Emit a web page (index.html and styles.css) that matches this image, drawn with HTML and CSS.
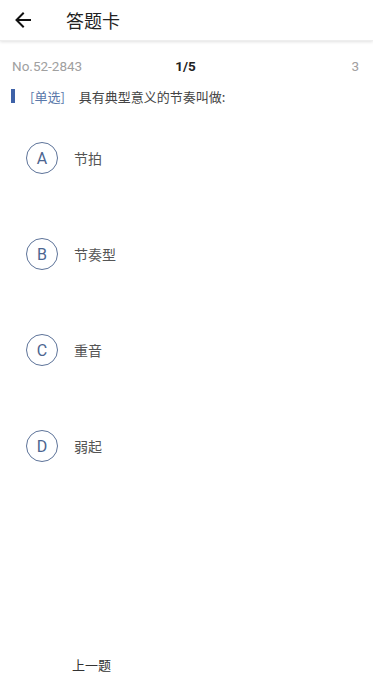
FILE: index.html
```html
<!DOCTYPE html>
<html lang="zh">
<head>
<meta charset="utf-8">
<link rel="stylesheet" href="styles.css">
</head>
<body>
<div class="page">
  <header class="topbar">
    <svg class="back" width="20" height="20" viewBox="0 0 20 20"><path d="M17 10H4M10 3.5L3.5 10L10 16.5" fill="none" stroke="#111" stroke-width="2" stroke-linecap="square"/></svg>
    <span class="title">答题卡</span>
  </header>
  <div class="meta">
    <span class="no">No.52-2843</span>
    <span class="idx">1/5</span>
    <span class="num">3</span>
  </div>
  <div class="question">
    <span class="bar"></span>
    <span class="type">[单选]</span>
    <span class="qtext">具有典型意义的节奏叫做:</span>
  </div>
  <ul class="options">
    <li class="opt"><span class="circle">A</span><span class="otext">节拍</span></li>
    <li class="opt"><span class="circle">B</span><span class="otext">节奏型</span></li>
    <li class="opt"><span class="circle">C</span><span class="otext">重音</span></li>
    <li class="opt"><span class="circle">D</span><span class="otext">弱起</span></li>
  </ul>
  <footer class="bottom">
    <span class="prev">上一题</span>
  </footer>
</div>
</body>
</html>
```
FILE: styles.css
```css
* { box-sizing: border-box; }
html, body { margin: 0; padding: 0; background: #fff; }
body { font-family: "Noto Sans CJK SC", Roboto, "Noto Sans", sans-serif; }
.page { width: 373px; height: 686px; display: flex; flex-direction: column; }
.topbar {
  height: 41px; display: flex; align-items: center; padding-left: 13px;
  box-shadow: 0 1px 3px rgba(0,0,0,0.12); border-bottom: 1px solid #eee;
}
.back { display: block; }
.title { margin-left: 33px; font-size: 18px; color: #222; line-height: 1; }
.meta {
  display: grid; grid-template-columns: 1fr auto 1fr; align-items: center;
  padding: 0 14px 0 12px; margin-top: 17px; height: 16px;
  font-family: Roboto, "Noto Sans", sans-serif; font-size: 13.5px; color: #a0a0a0;
}
.idx { color: #222; font-weight: bold; }
.num { justify-self: end; }
.question { display: flex; align-items: center; margin-top: 14px; height: 16px; }
.bar { width: 4px; height: 14px; background: #3e62a8; margin-left: 11px; }
.type { margin-left: 15px; font-size: 13px; color: #5a78aa; }
.qtext { margin-left: 14px; font-size: 13px; color: #444; }
.options { list-style: none; margin: 38px 0 0; padding: 0; display: flex; flex-direction: column; gap: 64px; }
.opt { display: flex; align-items: center; height: 32px; padding-left: 26px; }
.circle {
  width: 32px; height: 32px; border-radius: 50%; border: 1.3px solid #5d7399;
  display: flex; align-items: center; justify-content: center;
  font-family: Roboto, sans-serif; font-size: 16px; color: #4c6590;
}
.otext { margin-left: 16px; font-size: 14px; color: #555; }
.bottom { margin-top: auto; height: 40px; display: flex; align-items: center; padding-left: 72px; padding-bottom: 4px; }
.prev { font-size: 13px; color: #333; }
```
